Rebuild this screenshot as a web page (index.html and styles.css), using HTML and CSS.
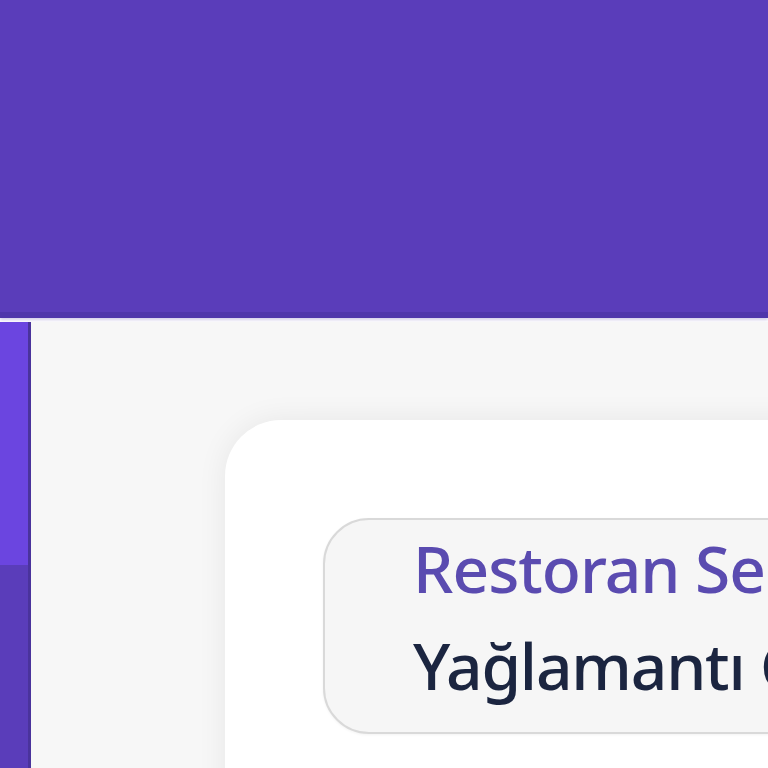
FILE: index.html
```html
<!DOCTYPE html>
<html lang="tr">
<head>
<meta charset="utf-8">
<link rel="stylesheet" href="styles.css">
</head>
<body>
<header class="topbar"></header>
<div class="layout">
  <aside class="sidebar">
    <div class="side-active"></div>
  </aside>
  <main class="main">
    <section class="card">
      <div class="pill">
        <div class="pill-label">Restoran Seçimi</div>
        <div class="pill-value">Yağlamantı Cafe</div>
      </div>
    </section>
  </main>
</div>
</body>
</html>
```
FILE: styles.css
```css
html, body {
  margin: 0;
  padding: 0;
  width: 768px;
  height: 768px;
  overflow: hidden;
  background: #ffffff;
  font-family: "Noto Sans", "Open Sans", sans-serif;
}
.topbar {
  height: 312px;
  background: #5a3dba;
  border-bottom: 6px solid #4f36ab;
  box-shadow: 0 2px 3px rgba(80, 60, 170, 0.25);
}
.layout {
  display: flex;
  margin-top: 4px;
  height: 446px;
}
.sidebar {
  width: 28px;
  flex: none;
  background: #5a3dba;
  border-right: 3px solid #4a339c;
  display: flex;
  flex-direction: column;
}
.side-active {
  height: 243px;
  background: #6b45e0;
}
.main {
  flex: 1;
  background: #f7f7f7;
  padding: 98px 0 0 194px;
  overflow: hidden;
}
.card {
  background: #ffffff;
  border-radius: 56px 0 0 0;
  box-shadow: 0 0 30px rgba(0, 0, 0, 0.07);
  padding: 98px 0 0 98px;
  height: 600px;
  width: 700px;
}
.pill {
  width: 800px;
  background: #f6f6f6;
  border: 2px solid #d9d9d9;
  border-radius: 46px;
  padding: 0 0 18px 88px;
  white-space: nowrap;
  box-shadow: 0 1px 3px rgba(0,0,0,0.05);
}
.pill-label {
  font-size: 64px;
  font-weight: 500;
  letter-spacing: -1px;
  line-height: 97px;
  color: #5a4bb0;
}
.pill-value {
  font-size: 64px;
  font-weight: 500;
  letter-spacing: -1.2px;
  line-height: 97px;
  color: #1b2540;
}
```
